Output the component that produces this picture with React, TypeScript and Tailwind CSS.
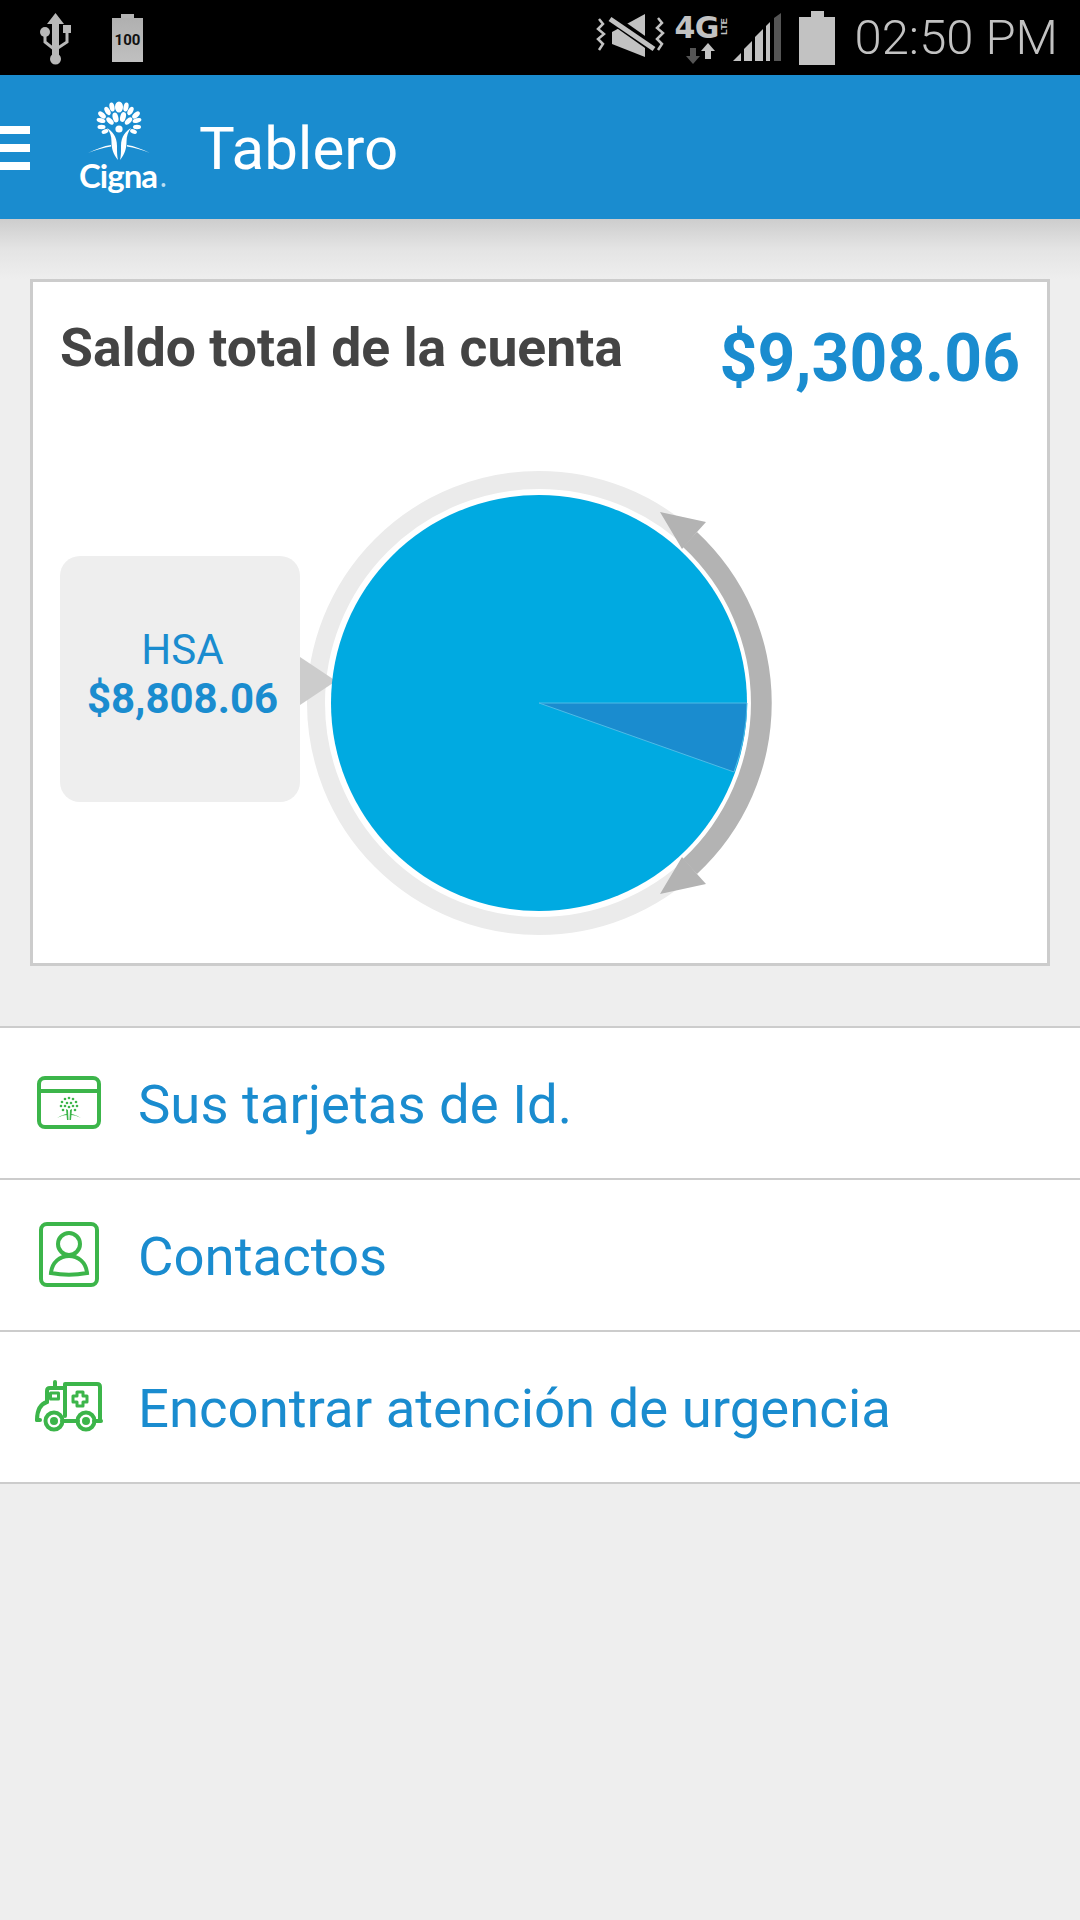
const GREEN = "#3cb54a";

const LEAVES: [number, number, number, number, number][] = [
  [119, 107, 4, 5.5, 0],
  [112, 107, 2.5, 4.5, -12],
  [126, 107, 2.5, 4.5, 12],
  [107.5, 111, 2.5, 4.5, -30],
  [130.5, 111, 2.5, 4.5, 30],
  [102, 115, 2.5, 4.5, -50],
  [136, 115, 2.5, 4.5, 50],
  [101, 120.5, 2.2, 4.5, -75],
  [137, 120.5, 2.2, 4.5, 75],
  [101.5, 127, 2.2, 4, -90],
  [137, 127, 2.2, 4, 90],
  [105, 131.5, 2.2, 3.5, -110],
  [133.5, 131.5, 2.2, 3.5, 110],
  [115.5, 117.5, 2.8, 5, -15],
  [123, 117, 2.8, 5, 15],
  [110, 121, 2.5, 4.5, -45],
  [128.5, 121, 2.5, 4.5, 45],
];

// small tree on the id card icon
const CARD_DOTS: [number, number][] = [
  [69, 1098], [65, 1099], [73, 1099], [62, 1102], [76, 1102], [61, 1106], [77, 1106],
  [63, 1110], [75, 1110], [67, 1103], [71, 1103], [65, 1106], [73, 1106], [69, 1107],
];

function CignaLogo() {
  return (
    <svg viewBox="75 98 95 100" className="w-[95px] h-[100px] shrink-0" fill="white">
      {LEAVES.map(([cx, cy, rx, ry, r], i) => (
        <ellipse key={i} cx={cx} cy={cy} rx={rx} ry={ry} transform={`rotate(${r} ${cx} ${cy})`} />
      ))}
      <circle cx="119" cy="129" r="3.6" />
      <path d="M107 128 C112 131 117 136 117 146 C117 152 117 156 118 160 C113 154 111.5 148 111.5 142 C111.5 136 110 132 107 128 Z" />
      <path d="M131 128 C126 131 121 136 121 146 C121 152 121 156 120 160 C125 154 126.5 148 126.5 142 C126.5 136 128 132 131 128 Z" />
      <path d="M88 153 C96 149 104 146 111 145 L111 146.5 C104 147.5 96 150 88 153 Z" />
      <path d="M150 153 C142 149 134 146 127 145 L127 146.5 C134 147.5 142 150 150 153 Z" />
      <text x="79" y="188" fontFamily="Lato, sans-serif" fontSize="33" fontWeight="700" textLength="79">
        Cigna
      </text>
      <circle cx="163.5" cy="185" r="2" opacity="0.7" />
    </svg>
  );
}

function UsbIcon() {
  return (
    <svg viewBox="38 10 36 58" className="w-[36px] h-[58px]" fill="#b8b8b8" stroke="none">
      <path d="M55.5 13 L64 24 H59 V55 H52 V24 H47 Z" />
      <circle cx="55.5" cy="59" r="5.5" />
      <circle cx="45" cy="32" r="5" />
      <rect x="63" y="25" width="8" height="8" />
      <path d="M45 34 V42 L55 50 L67 42 V32" fill="none" stroke="#b8b8b8" strokeWidth="3" />
    </svg>
  );
}

function SmallBattery() {
  return (
    <div className="flex flex-col items-center w-[31px]">
      <div className="w-[13px] h-[4px] bg-[#b4b4b4]" />
      <div className="w-[31px] h-[44px] bg-linear-to-b from-[#b0b0b0] to-[#c0c0c0] flex items-center justify-center">
        <span className="font-['Roboto',sans-serif] font-bold text-[15px] leading-none text-[#111]">100</span>
      </div>
    </div>
  );
}

function MuteVibrate() {
  return (
    <svg viewBox="594 16 72 50" className="w-[72px] h-[50px]">
      <polygon points="611,35 644,17 644,60 611,47" fill="#c2c2c2" />
      <line x1="610" y1="21" x2="654" y2="52" stroke="#000" strokeWidth="10" />
      <line x1="609" y1="22" x2="653" y2="52" stroke="#c2c2c2" strokeWidth="5" />
      <polyline points="598,22 602,27 597,32 603,37 597,42 602,47 598,53" fill="none" stroke="#c2c2c2" strokeWidth="2.5" />
      <polyline points="657,21 661,26 656,31 662,36 656,42 661,47 657,53" fill="none" stroke="#c2c2c2" strokeWidth="2.5" />
    </svg>
  );
}

function Network() {
  return (
    <div className="relative w-[60px] h-[52px]">
      <span className="absolute left-0 top-[1px] font-['DejaVu_Sans',sans-serif] font-bold text-[30px] leading-none tracking-[-0.5px] text-[#c2c2c2]">
        4G
      </span>
      <span className="absolute left-[39px] top-[10px] w-[22px] text-center rotate-[-90deg] font-['Liberation_Sans',sans-serif] font-bold text-[9px] leading-none text-[#c2c2c2]">
        LTE
      </span>
      <svg viewBox="0 0 32 24" className="absolute left-[12px] top-[29px] w-[32px] h-[24px]">
        <polygon points="4,7 10,7 10,15 14,15 7,23 0,15 4,15" fill="#555" />
        <polygon points="19,18 25,18 25,10 29,10 22,2 15,10 19,10" fill="#c2c2c2" />
      </svg>
    </div>
  );
}

function Signal() {
  return (
    <svg viewBox="735 14 49 49" className="w-[49px] h-[49px]">
      <polygon points="735,62 743,54 743,62" fill="#c2c2c2" />
      <polygon points="746,62 746,50 754,42 754,62" fill="#c2c2c2" />
      <polygon points="757,62 757,38 765,30 765,62" fill="#c2c2c2" />
      <polygon points="768,62 768,27 772,23 772,62" fill="#c2c2c2" />
      <polygon points="776,62 776,19 783,14 783,62" fill="#555" />
    </svg>
  );
}

function StatusBar() {
  return (
    <div className="h-[75px] bg-black flex items-center">
      <div className="ml-[38px] mt-[3px]">
        <UsbIcon />
      </div>
      <div className="ml-[38px] mt-[1px]">
        <SmallBattery />
      </div>
      <div className="ml-auto flex items-center">
        <MuteVibrate />
        <div className="ml-[7px]">
          <Network />
        </div>
        <div className="ml-[-1px]">
          <Signal />
        </div>
        <div className="ml-[17px] flex flex-col items-center">
          <div className="w-[13px] h-[6px] bg-[#c2c2c2]" />
          <div className="w-[36px] h-[48px] bg-[#c2c2c2]" />
        </div>
        <span className="ml-[19px] mr-[22px] font-['Roboto',sans-serif] font-light text-[49px] leading-none text-[#c2c2c2]">
          02:50 PM
        </span>
      </div>
    </div>
  );
}

function Header() {
  return (
    <div className="h-[144px] bg-[#1a8ccf] flex items-center">
      <div className="w-[30px] flex flex-col gap-[10px] mt-[2px]">
        <div className="h-[8px] bg-white" />
        <div className="h-[8px] bg-white" />
        <div className="h-[8px] bg-white" />
      </div>
      <div className="ml-[45px] mt-[2px]">
        <CignaLogo />
      </div>
      <h1 className="ml-[29px] mt-[3px] font-['Roboto',sans-serif] font-normal text-[60px] leading-none text-white">
        Tablero
      </h1>
    </div>
  );
}

function PieChart() {
  return (
    <svg viewBox="300 460 480 490" className="w-[480px] h-[490px] shrink-0">
      <circle cx="539" cy="703" r="223" fill="none" stroke="#ebebeb" strokeWidth="18" />
      <polygon points="300,657 336,681 300,705" fill="#cccccc" />
      <circle cx="539" cy="703" r="208" fill="#00aae1" />
      <path d="M539 703 L747 703 A208 208 0 0 1 734 772 Z" fill="#1a8ccf" stroke="#4fbbe6" strokeWidth="1" />
      <path d="M697 532 A233 233 0 0 1 697 874 L683 859 A213 213 0 0 0 683 547 Z" fill="#b3b3b3" />
      <polygon points="660,512 706,522 697,532 682,549" fill="#b3b3b3" />
      <polygon points="660,894 706,884 697,874 682,857" fill="#b3b3b3" />
    </svg>
  );
}

function BalanceCard() {
  return (
    <div className="mx-[30px] h-[687px] bg-white border-[3px] border-[#cccccc]">
      <div className="flex justify-between pl-[27px] pr-[27px] pt-[36px] h-[178px] font-['Roboto',sans-serif] font-bold">
        <h2 className="text-[53.5px] leading-[60px] text-[#444444]">Saldo total de la cuenta</h2>
        <span className="mt-[5px] text-[66px] leading-[72px] text-[#1a8ccf]">$9,308.06</span>
      </div>
      <div className="flex items-start pl-[27px]">
        <div className="mt-[96px] w-[240px] h-[246px] rounded-[20px] bg-[#eeeeee] flex flex-col items-center pt-[69px] pl-[5px] font-['Roboto',sans-serif] text-[#1a8ccf]">
          <span className="text-[42px] leading-[50px] font-normal">HSA</span>
          <span className="text-[42px] leading-[48px] font-bold">$8,808.06</span>
        </div>
        <PieChart />
      </div>
    </div>
  );
}

function CardIcon() {
  return (
    <svg viewBox="35 1068 70 70" className="w-[70px] h-[70px] shrink-0" fill="none" stroke={GREEN} strokeWidth="4">
      <rect x="39" y="1078" width="60" height="49" rx="6" />
      <line x1="39" y1="1091" x2="99" y2="1091" />
      <g fill={GREEN} stroke="none">
        {CARD_DOTS.map(([cx, cy], i) => (
          <circle key={i} cx={cx} cy={cy} r="1.3" />
        ))}
        <path d="M66 1109 L68 1110 L68.5 1120 H69.5 L70 1110 L72 1109 L71 1120 H67 Z" />
        <path d="M57 1118 C62 1115 65 1114 67 1114 L67 1115 C64 1115 61 1116 57 1118 Z" />
        <path d="M81 1118 C76 1115 73 1114 71 1114 L71 1115 C74 1115 77 1116 81 1118 Z" />
      </g>
    </svg>
  );
}

function ContactIcon() {
  return (
    <svg viewBox="35 1220 70 70" className="w-[70px] h-[70px] shrink-0" fill="none" stroke={GREEN} strokeWidth="4">
      <rect x="41" y="1224" width="56" height="61" rx="6" />
      <circle cx="69" cy="1244" r="11" />
      <path d="M51 1273 C52 1262 60 1256 69 1256 C78 1256 86 1262 87 1273 C76 1275 62 1275 51 1273 Z" />
    </svg>
  );
}

function AmbulanceIcon() {
  return (
    <svg viewBox="35 1372 70 70" className="w-[70px] h-[70px] shrink-0" fill="none" stroke={GREEN} strokeWidth="4" strokeLinecap="round" strokeLinejoin="round">
      <path d="M65 1416 V1384 H97 Q100 1384 100 1387 V1420" />
      <path d="M47 1402 V1391 Q47 1388 50 1388 H64" />
      <rect x="50.5" y="1393" width="8" height="6" strokeWidth="3" />
      <path d="M55 1382 V1388" />
      <path d="M47 1402 Q37 1405 37 1420" />
      <path d="M37 1420 H40" />
      <path d="M62 1421 H78" />
      <path d="M94 1421 H101" />
      <circle cx="54" cy="1421" r="8.5" />
      <circle cx="54" cy="1421" r="4" fill={GREEN} stroke="none" />
      <circle cx="86" cy="1421" r="8.5" />
      <circle cx="86" cy="1421" r="4" fill={GREEN} stroke="none" />
      <path d="M77 1392 H83 V1396 H87 V1402 H83 V1406 H77 V1402 H73 V1396 H77 Z" strokeWidth="3" />
    </svg>
  );
}

function ListRow({ icon, label }: { icon: React.ReactNode; label: string }) {
  return (
    <div className="h-[152px] bg-white border-b-2 border-[#cccccc] flex items-center pl-[35px]">
      {icon}
      <span className="ml-[33px] mt-[3px] font-['Roboto',sans-serif] text-[54.5px] leading-none text-[#1a8ccf]">
        {label}
      </span>
    </div>
  );
}

export default function App() {
  return (
    <div className="w-[1080px] h-[1920px] bg-[#eeeeee] overflow-hidden">
      <StatusBar />
      <Header />
      <div className="h-[60px] bg-linear-to-b from-[#cdcdcd] via-[#e4e4e4] to-[#eeeeee]" />
      <BalanceCard />
      <div className="mt-[60px] border-t-2 border-[#cccccc]">
        <ListRow icon={<CardIcon />} label="Sus tarjetas de Id." />
        <ListRow icon={<ContactIcon />} label="Contactos" />
        <ListRow icon={<AmbulanceIcon />} label="Encontrar atención de urgencia" />
      </div>
    </div>
  );
}
